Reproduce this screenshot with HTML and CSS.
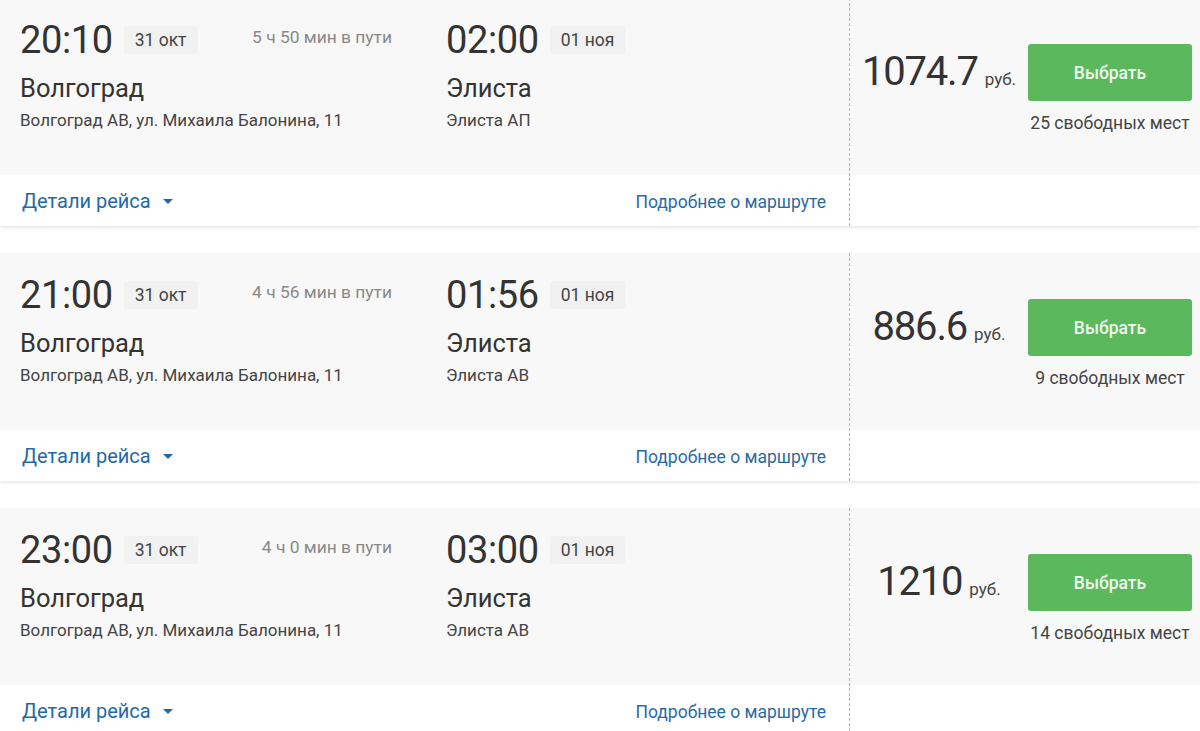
FILE: index.html
```html
<!DOCTYPE html>
<html lang="ru">
<head>
<meta charset="utf-8">
<title>Рейсы</title>
<link rel="stylesheet" href="styles.css">
</head>
<body>
<div class="list">

  <div class="card">
    <div class="main">
      <div class="body">
        <div class="stop dep">
          <div class="time-row">
            <span class="time">20:10</span>
            <span class="date">31 окт</span>
            <span class="dur">5 ч 50 мин в пути</span>
          </div>
          <div class="city">Волгоград</div>
          <div class="addr">Волгоград АВ, ул. Михаила Балонина, 11</div>
        </div>
        <div class="stop arr">
          <div class="time-row">
            <span class="time">02:00</span>
            <span class="date">01 ноя</span>
          </div>
          <div class="city">Элиста</div>
          <div class="addr">Элиста АП</div>
        </div>
      </div>
      <div class="foot">
        <a class="details">Детали рейса <span class="caret"></span></a>
        <a class="more">Подробнее о маршруте</a>
      </div>
    </div>
    <div class="side">
      <div class="side-body">
        <div class="price"><span class="sum">1074.7</span><span class="cur">руб.</span></div>
        <div class="buy">
          <button class="btn">Выбрать</button>
          <div class="seats">25 свободных мест</div>
        </div>
      </div>
      <div class="side-foot"></div>
    </div>
  </div>

  <div class="card">
    <div class="main">
      <div class="body">
        <div class="stop dep">
          <div class="time-row">
            <span class="time">21:00</span>
            <span class="date">31 окт</span>
            <span class="dur">4 ч 56 мин в пути</span>
          </div>
          <div class="city">Волгоград</div>
          <div class="addr">Волгоград АВ, ул. Михаила Балонина, 11</div>
        </div>
        <div class="stop arr">
          <div class="time-row">
            <span class="time">01:56</span>
            <span class="date">01 ноя</span>
          </div>
          <div class="city">Элиста</div>
          <div class="addr">Элиста АВ</div>
        </div>
      </div>
      <div class="foot">
        <a class="details">Детали рейса <span class="caret"></span></a>
        <a class="more">Подробнее о маршруте</a>
      </div>
    </div>
    <div class="side">
      <div class="side-body">
        <div class="price"><span class="sum">886.6</span><span class="cur">руб.</span></div>
        <div class="buy">
          <button class="btn">Выбрать</button>
          <div class="seats">9 свободных мест</div>
        </div>
      </div>
      <div class="side-foot"></div>
    </div>
  </div>

  <div class="card">
    <div class="main">
      <div class="body">
        <div class="stop dep">
          <div class="time-row">
            <span class="time">23:00</span>
            <span class="date">31 окт</span>
            <span class="dur">4 ч 0 мин в пути</span>
          </div>
          <div class="city">Волгоград</div>
          <div class="addr">Волгоград АВ, ул. Михаила Балонина, 11</div>
        </div>
        <div class="stop arr">
          <div class="time-row">
            <span class="time">03:00</span>
            <span class="date">01 ноя</span>
          </div>
          <div class="city">Элиста</div>
          <div class="addr">Элиста АВ</div>
        </div>
      </div>
      <div class="foot">
        <a class="details">Детали рейса <span class="caret"></span></a>
        <a class="more">Подробнее о маршруте</a>
      </div>
    </div>
    <div class="side">
      <div class="side-body">
        <div class="price"><span class="sum">1210</span><span class="cur">руб.</span></div>
        <div class="buy">
          <button class="btn">Выбрать</button>
          <div class="seats">14 свободных мест</div>
        </div>
      </div>
      <div class="side-foot"></div>
    </div>
  </div>

</div>
</body>
</html>
```

FILE: styles.css
```css
* { box-sizing: border-box; }

html, body {
  margin: 0;
  padding: 0;
  background: #ffffff;
  font-family: Roboto, "Noto Sans", "Liberation Sans", sans-serif;
  color: #333333;
  overflow: hidden;
}

.list {
  margin-top: -2px;
}

.card {
  display: flex;
  margin-bottom: 27px;
  box-shadow: 0 2px 3px rgba(0, 0, 0, 0.09);
  background: #ffffff;
}

.main {
  width: 850px;
  border-right: 1px dashed #b5b5b5;
}

.body {
  height: 177px;
  background: #f8f8f8;
  display: grid;
  grid-template-columns: 372px 1fr;
  column-gap: 54px;
  padding: 18px 0 0 20px;
}

.time-row {
  display: flex;
  align-items: center;
  height: 48px;
}

.time {
  font-size: 38px;
  line-height: 48px;
  color: #333333;
  letter-spacing: -0.4px;
}

.date {
  margin-left: 11px;
  padding: 0 11px;
  height: 28px;
  line-height: 28px;
  font-size: 17.5px;
  color: #444444;
  background: #f1f1f1;
  border-radius: 3px;
}

.dur {
  margin-left: auto;
  font-size: 17.4px;
  color: #888888;
  margin-top: -6px;
}

.city {
  margin-top: 9px;
  font-size: 25.5px;
  line-height: 30px;
  color: #333333;
}

.addr {
  margin-top: 6px;
  font-size: 17px;
  line-height: 22px;
  color: #444444;
}

.foot {
  height: 51px;
  display: flex;
  align-items: center;
  justify-content: space-between;
  padding: 0 23px 0 22px;
  background: #ffffff;
}

.details {
  font-size: 20px;
  color: #1f69a6;
  display: flex;
  align-items: center;
}

.caret {
  display: inline-block;
  width: 0;
  height: 0;
  margin-left: 12px;
  margin-top: 2px;
  border-left: 5px solid transparent;
  border-right: 5px solid transparent;
  border-top: 5px solid #1f69a6;
}

.more {
  font-size: 17.5px;
  color: #2a6aa3;
  margin-top: 2px;
}

.side {
  flex: 1;
}

.side-body {
  height: 177px;
  background: #f8f8f8;
  display: flex;
  align-items: flex-start;
  padding-top: 46px;
}

.price {
  width: 178px;
  height: 57px;
  display: flex;
  align-items: baseline;
  justify-content: center;
  padding-top: 6px;
}

.sum {
  font-size: 40px;
  line-height: 44px;
  color: #333333;
  letter-spacing: -1.2px;
}

.cur {
  margin-left: 7px;
  font-size: 17px;
  color: #444444;
}

.buy {
  width: 164px;
  display: flex;
  flex-direction: column;
  align-items: center;
}

.btn {
  width: 164px;
  height: 57px;
  border: 0;
  border-radius: 3px;
  background: #5cb85c;
  color: #eef8ee;
  font-family: inherit;
  font-size: 17.5px;
  font-weight: 500;
}

.seats {
  margin-top: 11px;
  font-size: 17.5px;
  line-height: 22px;
  color: #444444;
  white-space: nowrap;
}

.side-foot {
  height: 51px;
  background: #ffffff;
}
```
